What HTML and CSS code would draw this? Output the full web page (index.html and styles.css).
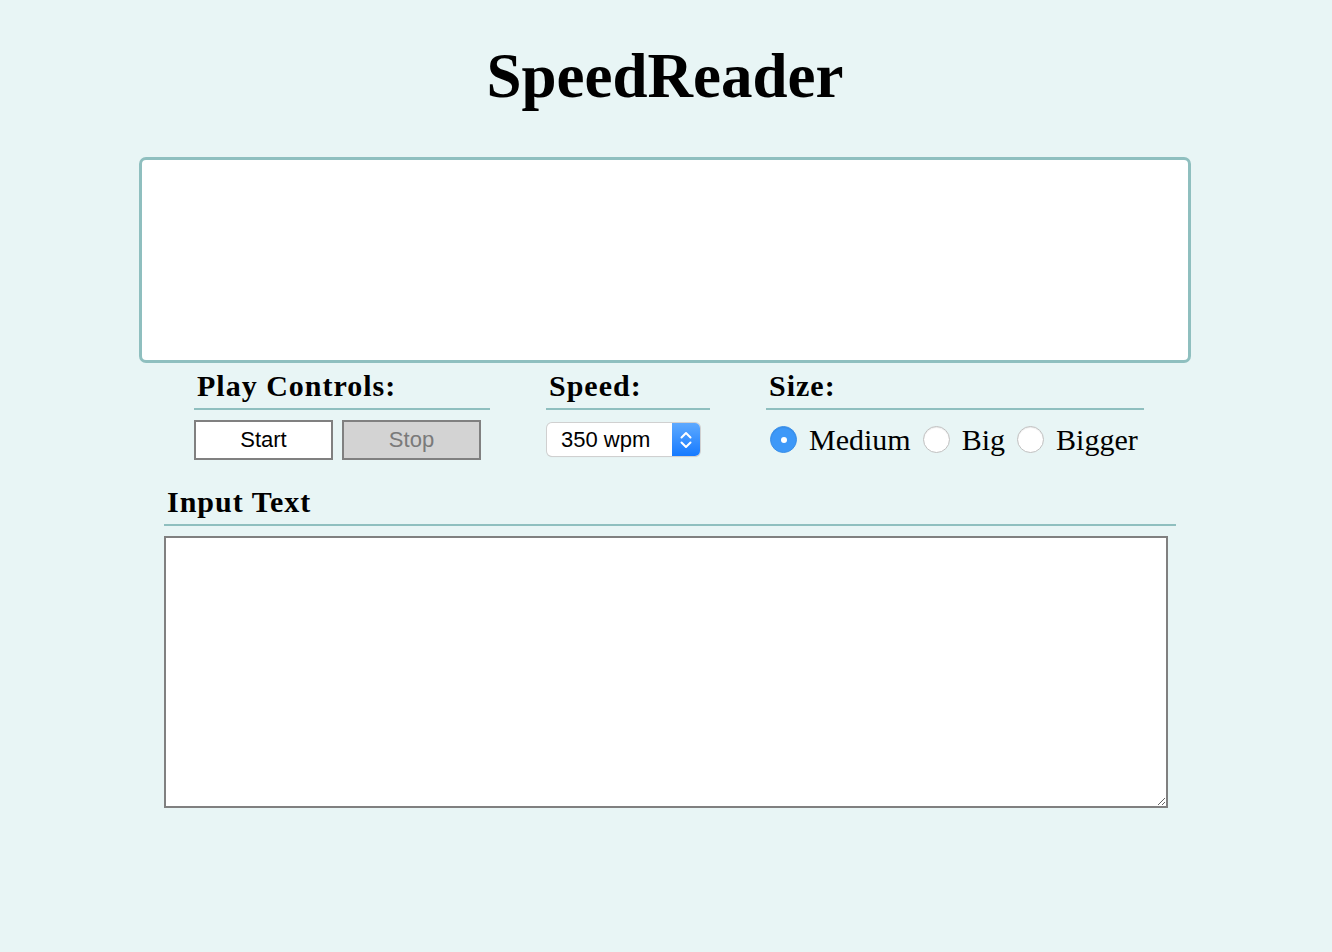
FILE: index.html
```html
<!DOCTYPE html>
<html>
<head>
<meta charset="utf-8">
<title>SpeedReader</title>
<link rel="stylesheet" href="styles.css">
</head>
<body>
<div class="page">
  <h1 class="title">SpeedReader</h1>
  <div class="reader"></div>
  <div class="controls">
    <div class="group group-play">
      <h2 class="group-title">Play Controls:</h2>
      <div class="group-body">
        <button class="btn btn-start">Start</button>
        <button class="btn btn-stop" disabled>Stop</button>
      </div>
    </div>
    <div class="group group-speed">
      <h2 class="group-title">Speed:</h2>
      <div class="group-body">
        <div class="select">
          <span class="select-value">350 wpm</span>
          <span class="select-arrow">
            <svg width="14" height="22" viewBox="0 0 14 22"><path d="M2.5 8.5 L7 4 L11.5 8.5 M2.5 13.5 L7 18 L11.5 13.5" fill="none" stroke="#fff" stroke-width="2" stroke-linecap="round" stroke-linejoin="round"/></svg>
          </span>
        </div>
      </div>
    </div>
    <div class="group group-size">
      <h2 class="group-title">Size:</h2>
      <div class="group-body radios">
        <label class="radio"><span class="dot dot-on"></span>Medium</label>
        <label class="radio"><span class="dot"></span>Big</label>
        <label class="radio"><span class="dot"></span>Bigger</label>
      </div>
    </div>
  </div>
  <div class="input-section">
    <h2 class="group-title input-title">Input Text</h2>
    <textarea class="input-text"></textarea>
  </div>
</div>
</body>
</html>
```
FILE: styles.css
```css
html, body {
  margin: 0;
  padding: 0;
  background: #e8f5f5;
}
body {
  font-family: "Liberation Serif", "Times New Roman", serif;
  color: #000;
}
.page {
  width: 1052px;
  padding-right: 2px;
  margin: 0 auto;
  padding-top: 1px;
}
.title {
  margin: 42px 0 0;
  text-align: center;
  font-size: 63px;
  font-weight: bold;
  line-height: 66px;
}
.reader {
  margin-top: 48px;
  height: 200px;
  background: #fff;
  border: 3px solid #8fbfbf;
  border-radius: 7px;
}
.controls {
  display: flex;
  padding-left: 55px;
  gap: 56px;
  margin-top: 6px;
}
.group-title {
  margin: 0;
  font-size: 30px;
  letter-spacing: 1px;
  font-weight: bold;
  line-height: 33px;
  padding: 0 0 6px 3px;
  border-bottom: 2px solid #8fbfbf;
}
.group-play { width: 296px; }
.group-speed { width: 164px; }
.group-size { width: 378px; }
.group-body {
  display: flex;
  align-items: center;
  margin-top: 9px;
  height: 41px;
}
.btn {
  width: 140px;
  height: 40px;
  font-family: "Liberation Sans", Arial, sans-serif;
  font-size: 22px;
  border: 2px solid #808080;
  background: #fff;
  color: #000;
  padding: 0;
  margin: 0 9px 0 0;
}
.btn-stop {
  background: #d3d3d3;
  color: #7a7a7a;
}
.select {
  display: flex;
  width: 153px;
  height: 33px;
  margin-left: 1px;
  border-radius: 5px;
  background: #fff;
  box-shadow: 0 0 0 1px #d0d0d0, 0 1px 1px rgba(0,0,0,0.15);
  overflow: hidden;
  font-family: "Liberation Sans", Arial, sans-serif;
  font-size: 22px;
}
.select-value {
  flex: 1;
  line-height: 33px;
  padding-left: 14px;
}
.select-arrow {
  width: 28px;
  display: flex;
  align-items: center;
  justify-content: center;
  background: linear-gradient(#5eaaff, #167aff);
}
.radio {
  display: flex;
  align-items: center;
  font-size: 30px;
  margin-right: 12px;
}
.dot {
  width: 27px;
  height: 27px;
  border-radius: 50%;
  box-sizing: border-box;
  background: #fff;
  border: 1px solid #c0c0c0;
  box-shadow: inset 0 1px 1px rgba(0,0,0,0.08);
  margin: 0 12px 0 4px;
  position: relative;
}
.radio + .radio .dot {
  margin-left: 0;
}
.dot-on {
  background: #3d98f8;
  border-color: #3a8fe8;
}
.dot-on::after {
  content: "";
  position: absolute;
  left: 9.5px;
  top: 9.5px;
  width: 6px;
  height: 6px;
  border-radius: 50%;
  background: #fff;
}
.input-section {
  margin: 25px 0 0 25px;
  width: 1012px;
}
.input-text {
  display: block;
  box-sizing: border-box;
  width: 1004px;
  height: 272px;
  margin-top: 10px;
  border: 2px solid #808080;
  background: #fff;
  padding: 4px;
  font-family: "Liberation Sans", Arial, sans-serif;
  font-size: 16px;
}
```
